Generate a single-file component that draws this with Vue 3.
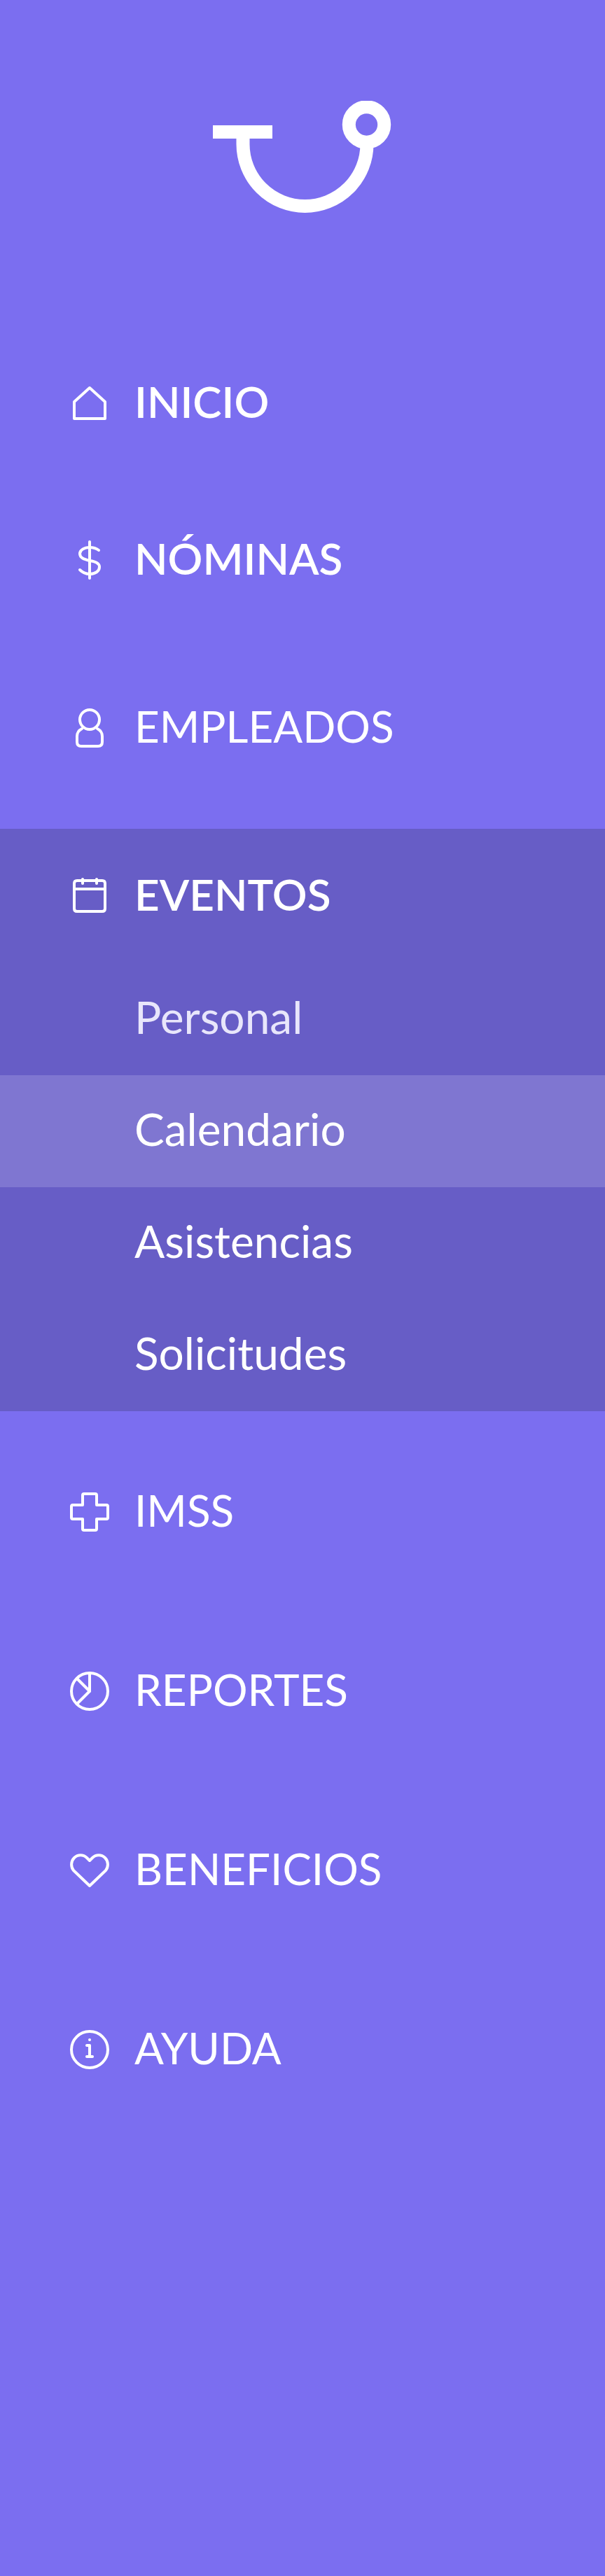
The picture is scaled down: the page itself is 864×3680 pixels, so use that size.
<script setup>
const mainItems = [
  { label: 'INICIO', icon: 'home', strong: true },
  { label: 'NÓMINAS', icon: 'dollar', strong: true },
  { label: 'EMPLEADOS', icon: 'user', spaced: true },
]

const eventItems = [
  { label: 'Personal', muted: true },
  { label: 'Calendario', active: true },
  { label: 'Asistencias' },
  { label: 'Solicitudes' },
]

const otherItems = [
  { label: 'IMSS', icon: 'cross' },
  { label: 'REPORTES', icon: 'chart' },
  { label: 'BENEFICIOS', icon: 'heart' },
  { label: 'AYUDA', icon: 'info' },
]

const icons = {
  home: ['M6 26 28 6 50 26V50H6Z'],
  dollar: [
    'M28 2V54',
    'M41 14C37 11 33 10 28 10C20 10 14 14 14 19C14 25 20 27 28 29C36 30 42 32 42 38C42 44 36 48 28 48C23 48 18 46 14 42',
  ],
  user: [
    'M28 2A14 14 0 1 1 28 30A14 14 0 1 1 28 2Z',
    'M17 29C13 31 10 35 10 40V48Q10 54 16 54H40Q46 54 46 48V40C46 35 43 31 39 29',
  ],
  calendar: [
    'M10 6H46Q50 6 50 10V46Q50 50 46 50H10Q6 50 6 46V10Q6 6 10 6Z',
    'M6 18H50',
    'M18 4V10',
    'M38 4V10',
  ],
  cross: [
    'M20 2H36Q38 2 38 4V18H52Q54 18 54 20V36Q54 38 52 38H38V52Q38 54 36 54H20Q18 54 18 52V38H4Q2 38 2 36V20Q2 18 4 18H18V4Q18 2 20 2Z',
  ],
  chart: ['M28 2A26 26 0 1 1 28 54A26 26 0 1 1 28 2Z', 'M28 2V28L10 46', 'M28 28 10 10'],
  heart: ['M28 14L24 10C19 5 11 5 6 10C1 15 1 23 5 28L28 50L51 28C55 23 55 15 50 10C45 5 37 5 32 10Z'],
  info: ['M28 2A26 26 0 1 1 28 54A26 26 0 1 1 28 2Z', 'M24 22H28V38', 'M24 38H32', 'M28 14V14'],
}
</script>

<template>
  <aside class="sidebar">
    <a class="brand" href="#" aria-label="Portada">
      <svg class="brand-mark" viewBox="0 0 256 160" aria-hidden="true">
        <path d="M0 44.500H85" />
        <path d="M43 44V62A88.500 88.500 0 0 0 220 62" />
        <circle cx="219.500" cy="34" r="25.200" />
      </svg>
    </a>

    <nav class="menu" aria-label="Principal">
      <ul class="list main">
        <li v-for="item in mainItems" :key="item.label" :class="{ spaced: item.spaced }">
          <a class="entry" :class="{ strong: item.strong }" href="#">
            <svg class="icon" viewBox="0 0 56 56" aria-hidden="true">
              <path v-for="d in icons[item.icon]" :key="d" :d="d" />
            </svg>
            <span class="label">{{ item.label }}</span>
          </a>
        </li>
      </ul>

      <section class="group">
        <button class="entry strong" type="button" aria-expanded="true" aria-controls="eventos">
          <svg class="icon" viewBox="0 0 56 56" aria-hidden="true">
            <path v-for="d in icons.calendar" :key="d" :d="d" />
          </svg>
          <span class="label">EVENTOS</span>
        </button>
        <ul id="eventos" class="list">
          <li v-for="item in eventItems" :key="item.label">
            <a
              class="sub"
              :class="{ active: item.active, muted: item.muted }"
              :aria-current="item.active ? 'page' : undefined"
              href="#"
            ><span class="label">{{ item.label }}</span></a>
          </li>
        </ul>
      </section>

      <ul class="list others">
        <li v-for="item in otherItems" :key="item.label">
          <a class="entry" href="#">
            <svg class="icon" viewBox="0 0 56 56" aria-hidden="true">
              <path v-for="d in icons[item.icon]" :key="d" :d="d" />
            </svg>
            <span class="label">{{ item.label }}</span>
          </a>
        </li>
      </ul>
    </nav>
  </aside>
</template>

<style>
body {
  margin: 0;
  background: #7b6ef0;
}
</style>

<style scoped>
.sidebar {
  box-sizing: border-box;
  min-height: 100vh;
  padding-top: 144px;
  background: #7b6ef0;
  color: #fff;
  font-family: Lato, "Open Sans", sans-serif;
  font-size: 62px;
  line-height: 72px;
}

.brand {
  display: flex;
  justify-content: center;
}

.brand-mark {
  width: 256px;
  height: 160px;
  fill: none;
  stroke: #fff;
  stroke-width: 19;
}

.menu {
  display: flex;
  flex-direction: column;
  gap: 48px;
  padding-top: 176px;
}

.list {
  margin: 0;
  padding: 0;
  list-style: none;
}

.main,
.others {
  display: flex;
  flex-direction: column;
}

.main {
  gap: 32px;
}

.spaced {
  padding-top: 16px;
}

.others {
  gap: 64px;
}

.entry {
  display: flex;
  align-items: center;
  gap: 36px;
  box-sizing: border-box;
  width: 100%;
  min-height: 192px;
  padding: 0 36px 0 100px;
  border: 0;
  background: none;
  color: inherit;
  font: inherit;
  text-align: left;
  text-decoration: none;
  cursor: pointer;
}

.label {
  padding-bottom: 6px;
}

.entry.strong {
  font-weight: 600;
}

.icon {
  flex: none;
  width: 56px;
  height: 56px;
  fill: none;
  stroke: currentColor;
  stroke-width: 4;
  stroke-linecap: round;
  stroke-linejoin: round;
}

.group {
  background: #675dc6;
}

.sub {
  display: flex;
  align-items: center;
  min-height: 160px;
  padding: 0 36px 0 192px;
  color: inherit;
  font-size: 64px;
  text-decoration: none;
}

.active {
  background: #7f76d1;
}

.muted {
  color: #e8e6fb;
}
</style>
